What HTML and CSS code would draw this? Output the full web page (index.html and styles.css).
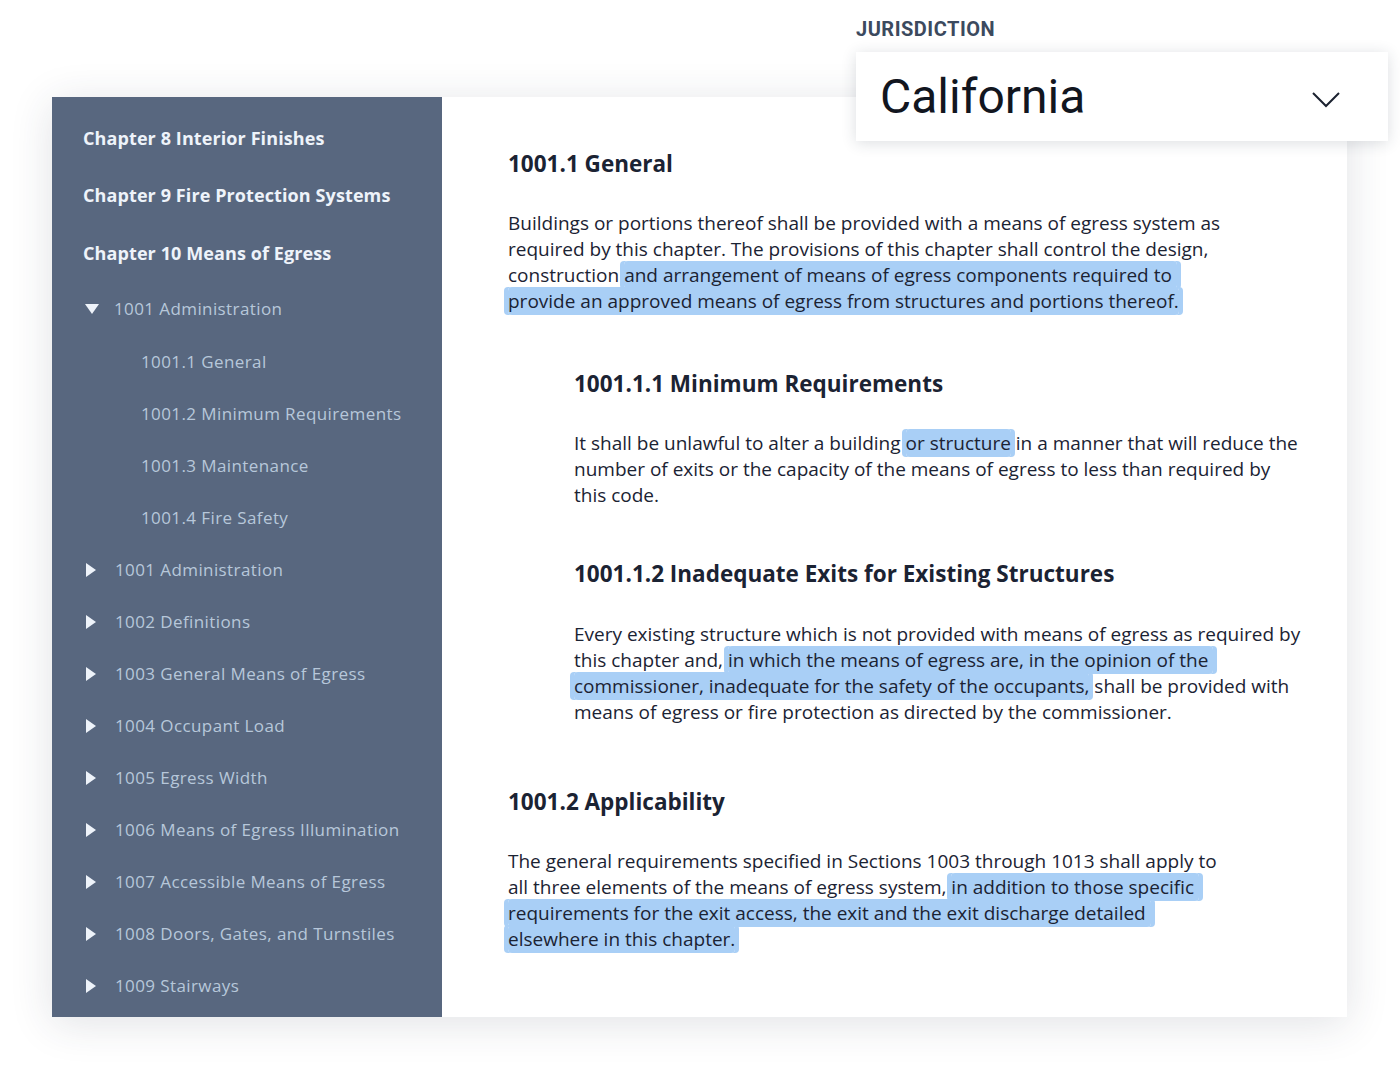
FILE: index.html
```html
<!DOCTYPE html>
<html lang="en">
<head>
<meta charset="utf-8">
<title>Building Code - Means of Egress</title>
<link rel="stylesheet" href="styles.css">
</head>
<body>
<div class="page">
  <div class="card">
    <nav class="sidebar">
      <div class="chapter">Chapter 8 Interior Finishes</div>
      <div class="chapter">Chapter 9 Fire Protection Systems</div>
      <div class="chapter">Chapter 10 Means of Egress</div>
      <div class="item open"><svg class="tri" viewBox="0 0 14 10" width="14" height="10"><path d="M0 0H14L7 10Z"/></svg><span>1001 Administration</span></div>
      <div class="subitem">1001.1 General</div>
      <div class="subitem">1001.2 Minimum Requirements</div>
      <div class="subitem">1001.3 Maintenance</div>
      <div class="subitem">1001.4 Fire Safety</div>
      <div class="item"><svg class="tri" viewBox="0 0 10 14" width="10" height="14"><path d="M0 0L10 7L0 14Z"/></svg><span>1001 Administration</span></div>
      <div class="item"><svg class="tri" viewBox="0 0 10 14" width="10" height="14"><path d="M0 0L10 7L0 14Z"/></svg><span>1002 Definitions</span></div>
      <div class="item"><svg class="tri" viewBox="0 0 10 14" width="10" height="14"><path d="M0 0L10 7L0 14Z"/></svg><span>1003 General Means of Egress</span></div>
      <div class="item"><svg class="tri" viewBox="0 0 10 14" width="10" height="14"><path d="M0 0L10 7L0 14Z"/></svg><span>1004 Occupant Load</span></div>
      <div class="item"><svg class="tri" viewBox="0 0 10 14" width="10" height="14"><path d="M0 0L10 7L0 14Z"/></svg><span>1005 Egress Width</span></div>
      <div class="item"><svg class="tri" viewBox="0 0 10 14" width="10" height="14"><path d="M0 0L10 7L0 14Z"/></svg><span>1006 Means of Egress Illumination</span></div>
      <div class="item"><svg class="tri" viewBox="0 0 10 14" width="10" height="14"><path d="M0 0L10 7L0 14Z"/></svg><span>1007 Accessible Means of Egress</span></div>
      <div class="item"><svg class="tri" viewBox="0 0 10 14" width="10" height="14"><path d="M0 0L10 7L0 14Z"/></svg><span>1008 Doors, Gates, and Turnstiles</span></div>
      <div class="item"><svg class="tri" viewBox="0 0 10 14" width="10" height="14"><path d="M0 0L10 7L0 14Z"/></svg><span>1009 Stairways</span></div>
    </nav>
    <main class="content">
      <section class="sec">
        <h2>1001.1 General</h2>
        <p>Buildings or portions thereof shall be provided with a means of egress system as<br>required by this chapter. The provisions of this chapter shall control the design,<br>construction <mark>and arrangement of means of egress components required to&nbsp;<br>provide an approved means of egress from structures and portions thereof.</mark></p>
        <section class="sub">
          <h3>1001.1.1 Minimum Requirements</h3>
          <p>It shall be unlawful to alter a building <mark>or structure</mark> in a manner that will reduce the<br>number of exits or the capacity of the means of egress to less than required by<br>this code.</p>
        </section>
        <section class="sub">
          <h3>1001.1.2 Inadequate Exits for Existing Structures</h3>
          <p>Every existing structure which is not provided with means of egress as required by<br>this chapter and, <mark>in which the means of egress are, in the opinion of the&nbsp;<br>commissioner, inadequate for the safety of the occupants,</mark> shall be provided with<br>means of egress or fire protection as directed by the commissioner.</p>
        </section>
      </section>
      <section class="sec">
        <h2>1001.2 Applicability</h2>
        <p>The general requirements specified in Sections 1003 through 1013 shall apply to<br>all three elements of the means of egress system, <mark>in addition to those specific&nbsp;<br>requirements for the exit access, the exit and the exit discharge detailed&nbsp;<br>elsewhere in this chapter.</mark></p>
      </section>
    </main>
  </div>
  <div class="jurisdiction">
    <div class="label">JURISDICTION</div>
    <div class="select">
      <span class="value">California</span>
      <svg class="chev" viewBox="0 0 28 16" width="28" height="16"><path d="M1 1L14 14L27 1" fill="none" stroke="#1b2230" stroke-width="2"/></svg>
    </div>
  </div>
</div>
</body>
</html>
```

FILE: styles.css
```css
* { box-sizing: border-box; }

html, body {
  margin: 0;
  padding: 0;
  background: #ffffff;
}

body {
  font-family: "Open Sans", "Liberation Sans", sans-serif;
  color: #1b2333;
}

.page {
  position: relative;
  width: 1400px;
  height: 1070px;
  padding: 97px 53px 0 52px;
  overflow: hidden;
}

.card {
  display: flex;
  height: 920px;
  background: #ffffff;
  box-shadow: 0 6px 40px rgba(40, 50, 70, 0.14);
}

.sidebar {
  flex: 0 0 390px;
  background: #58677f;
  padding: 12px 0 0 31px;
}

.chapter {
  height: 57.5px;
  display: flex;
  align-items: center;
  font-size: 18px;
  font-weight: 700;
  letter-spacing: 0.1px;
  color: #eef3fa;
}

.item {
  height: 52px;
  display: flex;
  align-items: center;
  font-size: 17px;
  color: #b7c7da;
  letter-spacing: 0.4px;
}

.item.open {
  height: 54px;
}

.item .tri {
  fill: #eef3fa;
  margin: 0 19px 0 3px;
  flex: 0 0 auto;
}

.item.open .tri {
  margin: 0 15px 0 2px;
}

.subitem {
  height: 52px;
  display: flex;
  align-items: center;
  padding-left: 58px;
  font-size: 17px;
  color: #b7c7da;
  letter-spacing: 0.4px;
}

.content {
  flex: 1;
  padding: 52px 30px 0 66px;
}

h2, h3 {
  margin: 0 0 31px;
  font-size: 22.5px;
  line-height: 30px;
  font-weight: 700;
  color: #1b2333;
}

p {
  margin: 0;
  font-size: 19px;
  line-height: 26px;
  color: #1b2333;
  white-space: nowrap;
}

.sub {
  margin-top: 55px;
  padding-left: 66px;
}

.sub + .sub {
  margin-top: 51px;
}

.sub + .sub h3 {
  margin-bottom: 32px;
}

.sec + .sec {
  margin-top: 62px;
}

mark {
  background: #a9cff6;
  color: inherit;
  padding: 1px 0;
  border-radius: 4px;
  box-shadow: 4px 0 0 #a9cff6, -4px 0 0 #a9cff6;
  -webkit-box-decoration-break: clone;
  box-decoration-break: clone;
}

.jurisdiction {
  position: absolute;
  left: 856px;
  top: 17px;
  width: 532px;
}

.label {
  font-family: "Roboto", "Liberation Sans", sans-serif;
  font-weight: 700;
  font-size: 20px;
  line-height: 24px;
  color: #3c4a5e;
  letter-spacing: 0.5px;
  margin-bottom: 11px;
}

.select {
  height: 89px;
  background: #ffffff;
  box-shadow: 0 2px 14px rgba(40, 50, 70, 0.16);
  display: flex;
  align-items: center;
  justify-content: space-between;
  padding: 0 48px 0 24px;
}

.value {
  font-family: "Roboto", "Liberation Sans", sans-serif;
  font-size: 48px;
  color: #12161f;
}

.chev {
  margin-top: 6px;
}
```
